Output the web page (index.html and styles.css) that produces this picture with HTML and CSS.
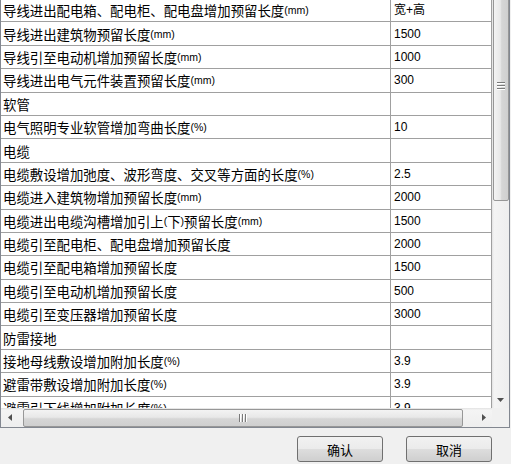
FILE: index.html
```html
<!DOCTYPE html>
<html lang="zh-CN">
<head>
<meta charset="utf-8">
<title>预留长度设置</title>
<link rel="stylesheet" href="styles.css">
</head>
<body>
<div class="dialog">
  <div class="grid">
    <div class="viewport">
      <div class="rows">
        <div class="row"><div class="name">导线进出配电箱、配电柜、配电盘增加预留长度<span class="unit">(mm)</span></div><div class="val">宽+高</div></div>
        <div class="row"><div class="name">导线进出建筑物预留长度<span class="unit">(mm)</span></div><div class="val">1500</div></div>
        <div class="row"><div class="name">导线引至电动机增加预留长度<span class="unit">(mm)</span></div><div class="val">1000</div></div>
        <div class="row"><div class="name">导线进出电气元件装置预留长度<span class="unit">(mm)</span></div><div class="val">300</div></div>
        <div class="row"><div class="name">软管</div><div class="val"></div></div>
        <div class="row"><div class="name">电气照明专业软管增加弯曲长度<span class="unit">(%)</span></div><div class="val">10</div></div>
        <div class="row"><div class="name">电缆</div><div class="val"></div></div>
        <div class="row"><div class="name">电缆敷设增加弛度、波形弯度、交叉等方面的长度<span class="unit">(%)</span></div><div class="val">2.5</div></div>
        <div class="row"><div class="name">电缆进入建筑物增加预留长度<span class="unit">(mm)</span></div><div class="val">2000</div></div>
        <div class="row"><div class="name">电缆进出电缆沟槽增加引上<span class="unit">(</span>下<span class="unit">)</span>预留长度<span class="unit">(mm)</span></div><div class="val">1500</div></div>
        <div class="row"><div class="name">电缆引至配电柜、配电盘增加预留长度</div><div class="val">2000</div></div>
        <div class="row"><div class="name">电缆引至配电箱增加预留长度</div><div class="val">1500</div></div>
        <div class="row"><div class="name">电缆引至电动机增加预留长度</div><div class="val">500</div></div>
        <div class="row"><div class="name">电缆引至变压器增加预留长度</div><div class="val">3000</div></div>
        <div class="row"><div class="name">防雷接地</div><div class="val"></div></div>
        <div class="row"><div class="name">接地母线敷设增加附加长度<span class="unit">(%)</span></div><div class="val">3.9</div></div>
        <div class="row"><div class="name">避雷带敷设增加附加长度<span class="unit">(%)</span></div><div class="val">3.9</div></div>
        <div class="row"><div class="name">避雷引下线增加附加长度<span class="unit">(%)</span></div><div class="val">3.9</div></div>
      </div>
    </div>
    <div class="vscroll">
      <div class="vthumb">
        <svg class="grip" width="8" height="9" viewBox="0 0 8 9"><path d="M0 0.5H8M0 3.5H8M0 6.5H8" stroke="#7a7a7a" stroke-width="1"/><path d="M0 1.5H8M0 4.5H8M0 7.5H8" stroke="#ffffff" stroke-width="1"/></svg>
      </div>
      <div class="vtrack"></div>
      <div class="sbtn">
        <svg width="7" height="4" viewBox="0 0 7 4"><path d="M0 0H7L3.5 4Z" fill="#505050"/></svg>
      </div>
    </div>
    <div class="hscroll">
      <div class="sbtn hbtn">
        <svg width="4" height="7" viewBox="0 0 4 7"><path d="M4 0V7L0 3.5Z" fill="#505050"/></svg>
      </div>
      <div class="htrack-a"></div>
      <div class="hthumb">
        <svg class="grip" width="9" height="8" viewBox="0 0 9 8"><path d="M0.5 0V8M3.5 0V8M6.5 0V8" stroke="#7a7a7a" stroke-width="1"/><path d="M1.5 0V8M4.5 0V8M7.5 0V8" stroke="#ffffff" stroke-width="1"/></svg>
      </div>
      <div class="htrack-b"></div>
      <div class="sbtn hbtn">
        <svg width="4" height="7" viewBox="0 0 4 7"><path d="M0 0V7L4 3.5Z" fill="#505050"/></svg>
      </div>
    </div>
    <div class="corner"></div>
  </div>
  <div class="buttons">
    <button class="btn">确认</button>
    <button class="btn">取消</button>
  </div>
</div>
</body>
</html>
```

FILE: styles.css
```css
html, body {
  margin: 0;
  padding: 0;
}

body {
  background: #f0f0f0;
  font-family: "Noto Sans CJK SC", "Liberation Sans", sans-serif;
  color: #000;
  width: 511px;
  height: 464px;
  overflow: hidden;
}

.dialog {
  display: flex;
  flex-direction: column;
}

.grid {
  width: 508px;
  display: grid;
  grid-template-columns: 491px 17px;
  grid-template-rows: 408px 19px;
  border-left: 1px solid #828790;
  border-right: 1px solid #828790;
  border-bottom: 1px solid #828790;
  background: #fff;
}

.viewport {
  overflow: hidden;
  background: #fff;
}

.rows {
  margin-top: -1px;
}

.row {
  display: grid;
  grid-template-columns: 390px 101px;
  height: 23.4px;
  box-sizing: border-box;
}

.name, .val {
  display: flex;
  align-items: center;
  border-right: 1px solid #a0a0a0;
  border-bottom: 1px solid #a0a0a0;
  white-space: nowrap;
  overflow: hidden;
  font-size: 13.4px;
  line-height: 16px;
}

.name {
  padding-left: 2px;
}

.val {
  padding-left: 3px;
  font-family: "Liberation Sans", "Noto Sans CJK SC", sans-serif;
  font-size: 12px;
}

.unit {
  font-family: "Liberation Sans", sans-serif;
  font-size: 10.5px;
}

/* vertical scrollbar */
.vscroll {
  display: flex;
  flex-direction: column;
  overflow: hidden;
  background: linear-gradient(to right, #e2e2e2 0, #f4f4f4 2px, #eeeeee 100%);
}

.vthumb {
  margin-top: -28px;
  height: 229px;
  flex: none;
  margin-left: 1px;
  margin-right: 0;
  box-sizing: border-box;
  border: 1px solid #979797;
  border-radius: 2px;
  background: linear-gradient(to right, #f3f3f3 0%, #e8e8e8 45%, #d6d6d6 55%, #cfcfcf 100%);
  display: flex;
  align-items: center;
  justify-content: center;
}

.vtrack {
  flex: 1;
}

.sbtn {
  height: 17px;
  flex: none;
  display: flex;
  align-items: center;
  justify-content: center;
}

/* horizontal scrollbar */
.hscroll {
  display: flex;
  background: linear-gradient(to bottom, #e2e2e2 0, #f4f4f4 2px, #eeeeee 100%);
}

.hbtn {
  width: 17px;
  height: auto;
}

.htrack-a {
  width: 5px;
  flex: none;
}

.hthumb {
  width: 440px;
  flex: none;
  margin-top: 1px;
  box-sizing: border-box;
  border: 1px solid #979797;
  border-radius: 2px;
  background: linear-gradient(to bottom, #f3f3f3 0%, #e8e8e8 45%, #d6d6d6 55%, #cfcfcf 100%);
  display: flex;
  align-items: center;
  justify-content: center;
}

.htrack-b {
  flex: 1;
}

.corner {
  background: #f0f0f0;
}

/* buttons */
.buttons {
  display: flex;
  justify-content: flex-end;
  gap: 23px;
  padding-right: 19px;
  margin-top: 8px;
}

.btn {
  width: 86px;
  height: 26px;
  box-sizing: border-box;
  border: 1px solid #707070;
  border-radius: 3px;
  background: linear-gradient(to bottom, #f2f2f2 0%, #ebebeb 48%, #dddddd 52%, #cfcfcf 100%);
  font-family: "Noto Sans CJK SC", sans-serif;
  font-size: 13px;
  color: #000;
  padding: 0;
}
```
